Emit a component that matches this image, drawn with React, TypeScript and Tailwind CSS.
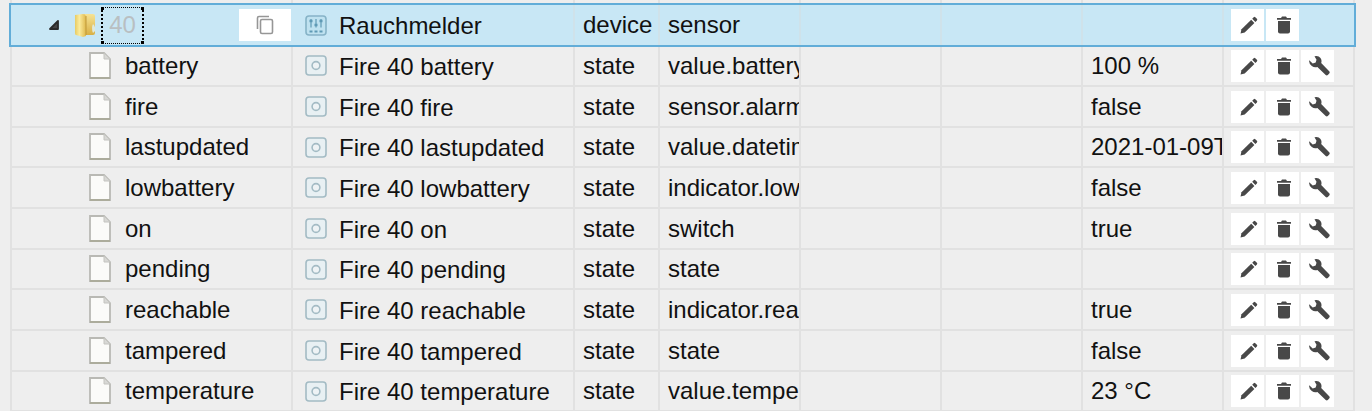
type StateRow = {
  id: string;
  name: string;
  role: string;
  value: string;
};

const states: StateRow[] = [
  { id: "battery", name: "Fire 40 battery", role: "value.battery", value: "100 %" },
  { id: "fire", name: "Fire 40 fire", role: "sensor.alarm", value: "false" },
  { id: "lastupdated", name: "Fire 40 lastupdated", role: "value.datetime", value: "2021-01-09T" },
  { id: "lowbattery", name: "Fire 40 lowbattery", role: "indicator.low", value: "false" },
  { id: "on", name: "Fire 40 on", role: "switch", value: "true" },
  { id: "pending", name: "Fire 40 pending", role: "state", value: "" },
  { id: "reachable", name: "Fire 40 reachable", role: "indicator.rea", value: "true" },
  { id: "tampered", name: "Fire 40 tampered", role: "state", value: "false" },
  { id: "temperature", name: "Fire 40 temperature", role: "value.tempe", value: "23 °C" },
];

const cell = "border-r-2 border-[#e1e1e1] p-0 pl-2 overflow-hidden align-middle";
const action = "flex h-8 w-[33px] items-center justify-center bg-white pl-0.5 text-[#484848]";

const FolderIcon = () => (
  <svg width="22" height="26" viewBox="0 0 22 26" aria-hidden="true" className="shrink-0">
    <defs>
      <linearGradient id="folderFront" x1="0" x2="1" y1="0" y2="0">
        <stop offset="0" stopColor="#e8cb62" />
        <stop offset="0.4" stopColor="#fbeb9c" />
        <stop offset="1" stopColor="#dfb94e" />
      </linearGradient>
      <linearGradient id="folderBack" x1="0" x2="0" y1="0" y2="1">
        <stop offset="0" stopColor="#f6e394" />
        <stop offset="1" stopColor="#d9b045" />
      </linearGradient>
    </defs>
    <path d="M10 2h9a2 2 0 0 1 2 2v17a2 2 0 0 1-2 2h-9z" fill="url(#folderBack)" />
    <path d="M1 3l8-1q3 0 3 4v18l-3 1-7-2q-1 0-1-2z" fill="url(#folderFront)" />
    <path d="M12 4v19" stroke="#bf9838" />
    <path d="M19 12q3 3 2 7l-2 2q-2-5 0-9z" fill="#dfe9dc" />
  </svg>
);

const FileIcon = () => (
  <svg width="22" height="28" viewBox="0 0 22 28" aria-hidden="true" className="shrink-0">
    <path d="M1 1h14l6 6v19H1z" fill="#fbfbf9" stroke="#b9b9b4" strokeWidth="1.800" />
    <path d="M1 26h20" stroke="#acac9c" strokeWidth="2" />
    <path d="M15 1v6h6z" fill="#d8d8d5" stroke="#c4c4c0" />
  </svg>
);

const DeviceIcon = () => (
  <svg width="22" height="21" viewBox="0 0 22 21" fill="none" stroke="#5f9ab5" aria-hidden="true" className="shrink-0">
    <rect x="1" y="1" width="20" height="19" rx="3" fill="#bfe2f0" stroke="#86b3c7" strokeWidth="1.600" />
    <path d="M6 4v8.500M11 4v8.500M16 4v8.500" strokeWidth="1.200" />
    <path d="M4.500 6h3M9.500 10h3M14.500 6h3" strokeWidth="2.400" />
    <path d="M4.500 16.500h3M9.500 16.500h3M14.500 16.500h3" strokeWidth="2" />
  </svg>
);

const StateIcon = () => (
  <svg width="22" height="21" viewBox="0 0 22 21" stroke="#a3bbc4" strokeWidth="1.600" aria-hidden="true" className="shrink-0">
    <rect x="1" y="1" width="20" height="19" rx="3" fill="#e8f0f3" />
    <circle cx="11" cy="10.500" r="3.900" fill="#eef3f5" />
  </svg>
);

const CopyIcon = () => (
  <svg width="18" height="20" viewBox="0 0 18 20" fill="none" stroke="#969696" strokeWidth="1.600" aria-hidden="true">
    <rect x="4.500" y="4.500" width="12" height="14" rx="1.500" />
    <path d="M1.500 14V3q0-1.500 1.500-1.500h10" />
  </svg>
);

const PencilIcon = () => (
  <svg width="18" height="18" viewBox="0 0 18 18" fill="currentColor" aria-hidden="true">
    <path d="M0.500 17.500l1-4.200L11.200 3.700l3.200 3.200L4.700 16.500z" />
    <path d="M12.200 2.700l1.500-1.500q.8-.7 1.600 0l1.600 1.600q.8.8 0 1.600l-1.500 1.500z" />
  </svg>
);

const TrashIcon = () => (
  <svg width="14" height="18" viewBox="0 0 14 18" fill="currentColor" aria-hidden="true">
    <path d="M0 2h4l1-1.500h4L10 2h4v1.800H0z" />
    <path d="M1 5h12v10.500q0 2-2 2H3q-2 0-2-2z" />
  </svg>
);

const WrenchIcon = () => (
  <svg width="22" height="22" viewBox="0 0 22 22" fill="currentColor" aria-hidden="true">
    <path d="M6.500 1.200q4-1 6 1.800 1.600 2.300.7 5l8 8.200q1 1.200 0 2.400l-1.400 1.500q-1 .9-2.100 0l-8.300-8.200q-3 1-5.600-.9Q.6 8.600 1.200 5.300l3.500 3.100 3-.8.8-2.900z" />
  </svg>
);

const Actions = ({ name, custom }: { name: string; custom?: boolean }) => (
  <div className="flex gap-0.5">
    <button type="button" aria-label={`Edit ${name}`} className={action}>
      <PencilIcon />
    </button>
    <button type="button" aria-label={`Delete ${name}`} className={action}>
      <TrashIcon />
    </button>
    {custom && (
      <button type="button" aria-label={`Configure ${name}`} className={action}>
        <WrenchIcon />
      </button>
    )}
  </div>
);

const App: React.FC = () => {
  return (
    <main className="overflow-hidden bg-[#eeeeee] pl-2.5 pr-[17px] font-['Liberation_Sans',Arial,sans-serif] text-2xl leading-7 text-[#111111]">
      <table className="w-full table-fixed border-separate border-spacing-0 whitespace-nowrap">
        <colgroup>
          <col className="w-[283px]" />
          <col className="w-[282px]" />
          <col className="w-[85px]" />
          <col className="w-[141px]" />
          <col className="w-[141px]" />
          <col className="w-[141px]" />
          <col className="w-[141px]" />
          <col />
        </colgroup>

        {/* Parent device */}
        <tbody>
          <tr className="h-1" aria-hidden="true">
            <td className="border-x-2 border-[#e1e1e1] p-0" />
            {[1, 2, 3, 4, 5, 6, 7].map((n) => (
              <td key={n} className="border-r-2 border-[#e1e1e1] p-0" />
            ))}
          </tr>
          <tr className="h-[42px] bg-[#c8e7f5] outline-2 -outline-offset-1 outline-[#62add8]">
            <td className="p-0 align-middle">
              <div className="flex items-center pl-[39px]">
                <button type="button" aria-label="Collapse 40" className="mr-[15px]">
                  <svg width="10" height="10" viewBox="0 0 10 10">
                    <path d="M9 1v8H1z" fill="#444" stroke="#2a2a2a" strokeWidth="1.800" strokeLinejoin="round" />
                  </svg>
                </button>
                <FolderIcon />
                <span className="relative ml-[5px] flex h-[37px] w-[43px] items-center justify-center border-x-2 border-y border-dotted border-black text-[#b9bfc2]">
                  40
                  <i className="absolute -left-0.5 -top-px size-[3px] bg-black" />
                  <i className="absolute -right-0.5 -top-px size-[3px] bg-black" />
                  <i className="absolute -bottom-px -left-0.5 size-[3px] bg-black" />
                  <i className="absolute -bottom-px -right-0.5 size-[3px] bg-black" />
                </span>
                <button
                  type="button"
                  aria-label="Copy 40"
                  className="ml-auto mr-0.5 flex h-8 w-[52px] items-center justify-center bg-white"
                >
                  <CopyIcon />
                </button>
              </div>
            </td>
            <td className="border-r-2 border-[#cfe2ea] p-0 pl-3">
              <div className="flex items-center gap-3">
                <DeviceIcon />
                <span className="pt-0.5">Rauchmelder</span>
              </div>
            </td>
            <td className="border-r-2 border-[#cfe2ea] p-0 pl-2">device</td>
            <td className="border-r-2 border-[#cfe2ea] p-0 pl-2">sensor</td>
            <td className="border-r-2 border-[#cfe2ea] p-0" />
            <td className="border-r-2 border-[#cfe2ea] p-0" />
            <td className="border-r-2 border-[#cfe2ea] p-0" />
            <td className="p-0 pl-[7px]">
              <Actions name="40" />
            </td>
          </tr>
        </tbody>

        {/* States of the device */}
        <tbody>
          {states.map((s) => (
            <tr key={s.id} className="h-[41px] [&:nth-child(3n)]:h-10 [&>td]:border-b-2">
              <td className={`${cell} border-l-2`}>
                <div className="flex items-center gap-3.5 pl-[69px]">
                  <FileIcon />
                  <span>{s.id}</span>
                </div>
              </td>
              <td className={cell}>
                <div className="flex items-center gap-3 pl-1">
                  <StateIcon />
                  <span className="pt-0.5">{s.name}</span>
                </div>
              </td>
              <td className={cell}>state</td>
              <td className={cell}>{s.role}</td>
              <td className={cell} />
              <td className={cell} />
              <td className={cell}>{s.value}</td>
              <td className="overflow-hidden border-r-2 border-[#e1e1e1] p-0 pl-[7px] align-middle">
                <Actions name={s.id} custom />
              </td>
            </tr>
          ))}
        </tbody>
      </table>
    </main>
  );
};

export default App;
